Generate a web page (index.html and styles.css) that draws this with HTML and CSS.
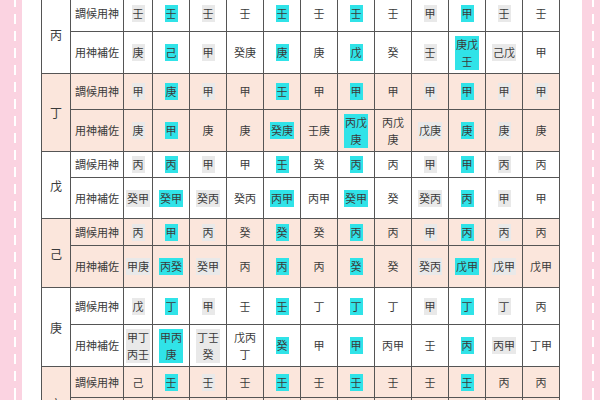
FILE: index.html
```html
<!DOCTYPE html>
<html lang="zh-Hant">
<head>
<meta charset="utf-8">
<title>調候用神表</title>
<link rel="stylesheet" href="styles.css">
</head>
<body>
<div class="page">
  <div class="strip strip-left"><div class="dash"></div></div>
  <main class="content">
    <div class="grid">
      <!-- 丙 -->
      <div class="c lbl">丙</div>
      <div class="c">調候用神</div>
      <div class="c"><span class="hg">壬</span></div>
      <div class="c"><span class="hc">壬</span></div>
      <div class="c"><span class="hg">壬</span></div>
      <div class="c">壬</div>
      <div class="c"><span class="hc">壬</span></div>
      <div class="c">壬</div>
      <div class="c"><span class="hc">壬</span></div>
      <div class="c">壬</div>
      <div class="c"><span class="hg">甲</span></div>
      <div class="c"><span class="hc">甲</span></div>
      <div class="c"><span class="hg">壬</span></div>
      <div class="c">壬</div>

      <div class="c">用神補佐</div>
      <div class="c"><span class="hg">庚</span></div>
      <div class="c"><span class="hc">己</span></div>
      <div class="c"><span class="hg">甲</span></div>
      <div class="c">癸庚</div>
      <div class="c"><span class="hc">庚</span></div>
      <div class="c">庚</div>
      <div class="c"><span class="hc">戊</span></div>
      <div class="c">癸</div>
      <div class="c"><span class="hg">壬</span></div>
      <div class="c"><span class="hc">庚戊<br>壬</span></div>
      <div class="c"><span class="hg">己戊</span></div>
      <div class="c">甲</div>

      <!-- 丁 -->
      <div class="c p lbl">丁</div>
      <div class="c p">調候用神</div>
      <div class="c p"><span class="hg">甲</span></div>
      <div class="c p"><span class="hc">庚</span></div>
      <div class="c p"><span class="hg">甲</span></div>
      <div class="c p">甲</div>
      <div class="c p"><span class="hc">壬</span></div>
      <div class="c p">甲</div>
      <div class="c p"><span class="hc">甲</span></div>
      <div class="c p">甲</div>
      <div class="c p"><span class="hg">甲</span></div>
      <div class="c p"><span class="hc">甲</span></div>
      <div class="c p"><span class="hg">甲</span></div>
      <div class="c p"><span class="hg">甲</span></div>

      <div class="c p">用神補佐</div>
      <div class="c p"><span class="hg">庚</span></div>
      <div class="c p"><span class="hc">甲</span></div>
      <div class="c p">庚</div>
      <div class="c p">庚</div>
      <div class="c p"><span class="hc">癸庚</span></div>
      <div class="c p">壬庚</div>
      <div class="c p"><span class="hc">丙戊<br>庚</span></div>
      <div class="c p">丙戊<br>庚</div>
      <div class="c p"><span class="hg">戊庚</span></div>
      <div class="c p"><span class="hc">庚</span></div>
      <div class="c p"><span class="hg">庚</span></div>
      <div class="c p">庚</div>

      <!-- 戊 -->
      <div class="c lbl">戊</div>
      <div class="c">調候用神</div>
      <div class="c"><span class="hg">丙</span></div>
      <div class="c"><span class="hc">丙</span></div>
      <div class="c"><span class="hg">甲</span></div>
      <div class="c">甲</div>
      <div class="c"><span class="hc">壬</span></div>
      <div class="c">癸</div>
      <div class="c"><span class="hc">丙</span></div>
      <div class="c">丙</div>
      <div class="c"><span class="hg">甲</span></div>
      <div class="c"><span class="hc">甲</span></div>
      <div class="c"><span class="hg">丙</span></div>
      <div class="c">丙</div>

      <div class="c">用神補佐</div>
      <div class="c"><span class="hg">癸甲</span></div>
      <div class="c"><span class="hc">癸甲</span></div>
      <div class="c"><span class="hg">癸丙</span></div>
      <div class="c">癸丙</div>
      <div class="c"><span class="hc">丙甲</span></div>
      <div class="c">丙甲</div>
      <div class="c"><span class="hc">癸甲</span></div>
      <div class="c">癸</div>
      <div class="c"><span class="hg">癸丙</span></div>
      <div class="c"><span class="hc">丙</span></div>
      <div class="c"><span class="hg">甲</span></div>
      <div class="c">甲</div>

      <!-- 己 -->
      <div class="c p lbl">己</div>
      <div class="c p">調候用神</div>
      <div class="c p"><span class="hg">丙</span></div>
      <div class="c p"><span class="hc">甲</span></div>
      <div class="c p"><span class="hg">丙</span></div>
      <div class="c p">癸</div>
      <div class="c p"><span class="hc">癸</span></div>
      <div class="c p">癸</div>
      <div class="c p"><span class="hc">丙</span></div>
      <div class="c p">丙</div>
      <div class="c p"><span class="hg">甲</span></div>
      <div class="c p"><span class="hc">丙</span></div>
      <div class="c p"><span class="hg">丙</span></div>
      <div class="c p">丙</div>

      <div class="c p">用神補佐</div>
      <div class="c p"><span class="hg">甲庚</span></div>
      <div class="c p"><span class="hc">丙癸</span></div>
      <div class="c p"><span class="hg">癸甲</span></div>
      <div class="c p">丙</div>
      <div class="c p"><span class="hc">丙</span></div>
      <div class="c p">丙</div>
      <div class="c p"><span class="hc">癸</span></div>
      <div class="c p">癸</div>
      <div class="c p"><span class="hg">癸丙</span></div>
      <div class="c p"><span class="hc">戊甲</span></div>
      <div class="c p"><span class="hg">戊甲</span></div>
      <div class="c p">戊甲</div>

      <!-- 庚 -->
      <div class="c lbl">庚</div>
      <div class="c">調候用神</div>
      <div class="c"><span class="hg">戊</span></div>
      <div class="c"><span class="hc">丁</span></div>
      <div class="c"><span class="hg">甲</span></div>
      <div class="c">壬</div>
      <div class="c"><span class="hc">壬</span></div>
      <div class="c">丁</div>
      <div class="c"><span class="hc">丁</span></div>
      <div class="c">丁</div>
      <div class="c"><span class="hg">甲</span></div>
      <div class="c"><span class="hc">丁</span></div>
      <div class="c"><span class="hg">丁</span></div>
      <div class="c">丙</div>

      <div class="c">用神補佐</div>
      <div class="c"><span class="hg">甲丁<br>丙壬</span></div>
      <div class="c"><span class="hc">甲丙<br>庚</span></div>
      <div class="c"><span class="hg">丁壬<br>癸</span></div>
      <div class="c">戊丙<br>丁</div>
      <div class="c"><span class="hc">癸</span></div>
      <div class="c">甲</div>
      <div class="c"><span class="hc">甲</span></div>
      <div class="c">丙甲</div>
      <div class="c">壬</div>
      <div class="c"><span class="hc">丙</span></div>
      <div class="c"><span class="hg">丙甲</span></div>
      <div class="c">丁甲</div>

      <!-- 辛 -->
      <div class="c p lbl">辛</div>
      <div class="c p">調候用神</div>
      <div class="c p">己</div>
      <div class="c p"><span class="hc">壬</span></div>
      <div class="c p"><span class="hg">壬</span></div>
      <div class="c p">壬</div>
      <div class="c p"><span class="hc">壬</span></div>
      <div class="c p">壬</div>
      <div class="c p"><span class="hc">壬</span></div>
      <div class="c p">壬</div>
      <div class="c p">壬</div>
      <div class="c p"><span class="hc">壬</span></div>
      <div class="c p">丙</div>
      <div class="c p">丙</div>

      <div class="c p"></div>
      <div class="c p"></div>
      <div class="c p"></div>
      <div class="c p"></div>
      <div class="c p"></div>
      <div class="c p"></div>
      <div class="c p"></div>
      <div class="c p"></div>
      <div class="c p"></div>
      <div class="c p"></div>
      <div class="c p"></div>
      <div class="c p"></div>
      <div class="c p"></div>
    </div>
  </main>
  <div class="strip strip-right"><div class="dash"></div></div>
</div>
</body>
</html>
```

FILE: styles.css
```css
html, body {
  margin: 0;
  padding: 0;
  background: #fff;
}

body {
  font-family: "Noto Sans CJK TC", "Noto Sans CJK SC", sans-serif;
  color: #3a3a3a;
}

.page {
  display: flex;
  width: 600px;
  height: 400px;
  overflow: hidden;
}

.strip {
  flex: none;
  height: 100%;
  background: #fbd3e1;
  box-sizing: border-box;
}

.strip-left {
  width: 22px;
  padding-left: 14px;
}

.strip-right {
  width: 18px;
  padding-left: 10px;
  margin-left: auto;
}

.dash {
  width: 2px;
  height: 100%;
  background: repeating-linear-gradient(to bottom, #fff 0 10px, transparent 10px 17px);
  background-position: 0 -3px;
}

.content {
  flex: none;
  padding-left: 19px;
}

.grid {
  display: grid;
  grid-template-columns: 28px 52px 28px repeat(11, 36px);
  grid-template-rows: 35px 41px 35px 41px 25px 40px 26px 41px 36px 41px 30px 41px;
  gap: 1px;
  padding: 1px;
  background: #555;
  margin-top: -5px;
  font-size: 11px;
}

.c {
  display: flex;
  align-items: center;
  justify-content: center;
  text-align: center;
  line-height: 17px;
  background: #fff;
  white-space: nowrap;
}

.p {
  background: #fbe6dc;
}

.lbl {
  grid-row: span 2;
  font-size: 12px;
}

.hc {
  background: #30e3e8;
  padding: 0 1px;
}

.hg {
  background: #e9e9e9;
  padding: 0 1px;
}
```
